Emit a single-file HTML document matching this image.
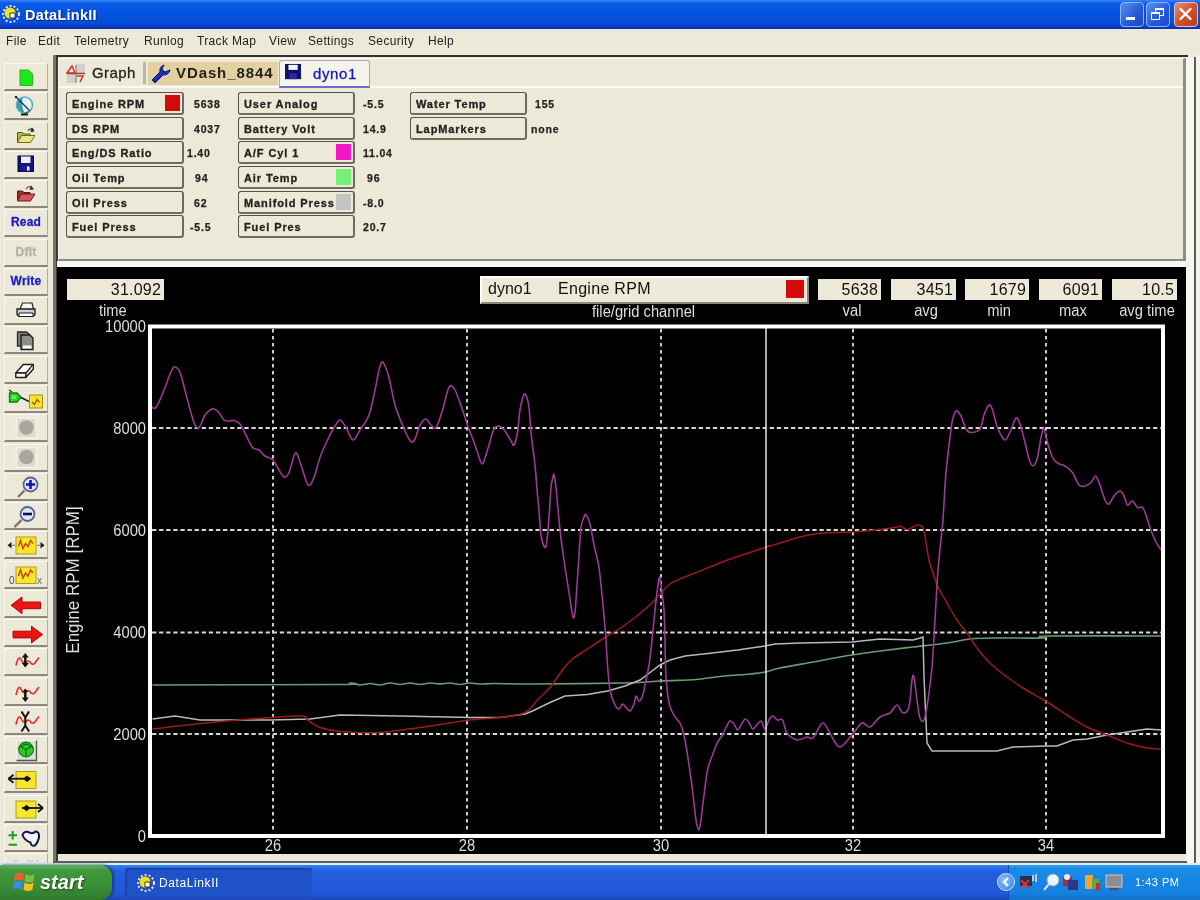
<!DOCTYPE html><html><head><meta charset="utf-8"><title>DataLinkII</title><style>
*{box-sizing:border-box;margin:0;padding:0}
html,body{width:1200px;height:900px;overflow:hidden;background:#ece9d8;font-family:"Liberation Sans",sans-serif;}
#root{position:relative;width:1200px;height:900px;overflow:hidden;background:#ece9d8;filter:blur(.75px)}
.abs{position:absolute}
#title{position:absolute;left:0;top:0;width:1200px;height:29px;background:linear-gradient(#3a86f4 0,#0c5eea 10%,#0453e0 40%,#0450da 78%,#0a3cc4 92%,#0a2eb0 100%);}
#title .t{position:absolute;left:25px;top:7px;color:#fff;font-weight:bold;font-size:14.500px;letter-spacing:.25px;text-shadow:1px 1px 1px #0a2a80}
.wb{position:absolute;top:2px;width:24px;height:25px;border:1.500px solid #8db6ff;border-radius:4px;background:linear-gradient(135deg,#5b8ff0,#2458d8 60%,#1c48c0)}
#menu{position:absolute;left:0;top:29px;width:1200px;height:26px;background:#ece9d8}
#menu span{position:absolute;top:5px;font-size:12px;color:#222;letter-spacing:.35px}
.tb{position:absolute;left:4px;width:44px;height:28px;background:#ece9d8;border-bottom:2px solid #8a887c;border-right:1px solid #b0ad9e;border-top:1px solid #f8f7f0;border-left:1px solid #f8f7f0}
.tb svg{position:absolute;left:-1px;top:-1px}
.tbt{font-weight:bold;font-size:12px;text-align:center;line-height:25px;color:#1a1ac8;letter-spacing:.2px;-webkit-text-stroke:.3px currentColor}
.cb{position:absolute;height:23px;letter-spacing:.9px;-webkit-text-stroke:.3px #222;border:1px solid #55534a;border-bottom:2px solid #6e6c62;border-right:2px solid #6e6c62;border-radius:3px;background:#ece9d8;font-weight:bold;font-size:11px;color:#222;line-height:22px;padding-left:5px;white-space:nowrap;overflow:hidden}
.cb i{position:absolute;right:2px;top:2px;width:15px;height:16px;display:block}
.cv{position:absolute;font-weight:bold;font-size:10.500px;color:#222;white-space:nowrap;letter-spacing:.8px;-webkit-text-stroke:.25px #222}
.vb{position:absolute;top:279px;height:21px;background:#ece9d8;color:#111;font-size:16px;text-align:right;line-height:21px;padding-right:3px}
.vl{position:absolute;top:302px;color:#dedede;font-size:16px;transform:scaleX(.92);text-align:center;width:90px}
.al{position:absolute;color:#dedede;font-size:16px;transform:scaleX(.92);white-space:nowrap}
</style></head><body><div id="root">
<div id="title"><svg class="abs" style="left:1px;top:4px" width="20" height="20" viewBox="0 0 20 20"><g stroke="#e8e8e8" stroke-width="2" stroke-dasharray="2 2"><circle cx="10" cy="10" r="8" fill="none"/></g><circle cx="9" cy="9" r="5.5" fill="#f2e21a"/><path d="M9 14 L9 9 L14 9 L14 14Z" fill="#fff" stroke="#333" stroke-width="1"/></svg><div class="t">DataLinkII</div>
<div class="wb" style="left:1119.500px"><div class="abs" style="left:5px;top:14px;width:9px;height:3px;background:#fff"></div></div>
<div class="wb" style="left:1146px"><div class="abs" style="left:8px;top:5px;width:9px;height:8px;border:1px solid #fff;border-top:2px solid #fff"></div><div class="abs" style="left:4px;top:9px;width:9px;height:8px;border:1px solid #fff;border-top:2px solid #fff;background:#2c5fd8"></div></div>
<div class="wb" style="left:1173.500px;border-color:#e8c0c8;background:linear-gradient(135deg,#e8907a,#d2502c 50%,#b83a1c)"><svg width="21" height="22" viewBox="0 0 21 22"><path d="M5.5 6 L15.5 16 M15.5 6 L5.5 16" stroke="#fff" stroke-width="2.4" stroke-linecap="round"/></svg></div>
</div>
<div id="menu">
<span style="left:6px">File</span>
<span style="left:38px">Edit</span>
<span style="left:74px">Telemetry</span>
<span style="left:144px">Runlog</span>
<span style="left:197px">Track Map</span>
<span style="left:269px">View</span>
<span style="left:308px">Settings</span>
<span style="left:368px">Security</span>
<span style="left:428px">Help</span>
</div>
<div class="tb" style="top:63px"><svg width="44" height="28" viewBox="0 0 44 28"><path d="M16 7 h8.500 l4 4 v11.500 h-12.500z" fill="#1de61d" stroke="#22b822" stroke-width="1"/></svg></div>
<div class="tb" style="top:92px"><svg width="44" height="28" viewBox="0 0 44 28"><circle cx="20.500" cy="13" r="8" fill="#e2f4f4" stroke="#5fb0b4" stroke-width="1.6"/><path d="M12.800 13 q1 -6 6 -7.500 q-2 7 1.500 15 q-7 -1 -7.500 -7.500z" fill="#3f9ca8"/><path d="M19 21 q5 -1 8 -4 q-1 4 -5 5z" fill="#2a7a88"/><path d="M12 5 L25 18" stroke="#1c2c66" stroke-width="1.300"/><circle cx="12" cy="5" r="1.3" fill="#1c2c66"/><path d="M17 22.500 h7" stroke="#1a1a1a" stroke-width="2"/></svg></div>
<div class="tb" style="top:122px"><svg width="44" height="28" viewBox="0 0 44 28"><path d="M13.500 20.500 v-10 h5 l1.500 1.500 h6 v2" fill="#b8b048" stroke="#5e5e1c" stroke-width="1"/><path d="M13.500 20.500 l4 -7 h13.500 l-4.500 7z" fill="#ece488" stroke="#6a6a20" stroke-width="1"/><path d="M24 8.500 q3 -3 5.500 -0.500" fill="none" stroke="#333" stroke-width="1.2"/><path d="M28 5.500 l2.500 4 l-4 0.500z" fill="#222"/></svg></div>
<div class="tb" style="top:151px"><svg width="44" height="28" viewBox="0 0 44 28"><rect x="14" y="5" width="15.500" height="15.500" fill="#12127e" stroke="#080840" stroke-width="1"/><rect x="17" y="5.500" width="9.500" height="6.500" fill="#eeeefc"/><rect x="17.500" y="14.500" width="8.500" height="6" fill="#1a1a8a"/><rect x="23" y="15.500" width="2.500" height="4" fill="#eeeefc"/></svg></div>
<div class="tb" style="top:180px"><svg width="44" height="28" viewBox="0 0 44 28"><path d="M13.500 21 v-10 h5 l1.500 1.500 h6 v2" fill="#a02c2c" stroke="#5e1414" stroke-width="1"/><path d="M13.500 21 l4 -7 h13.500 l-4.500 7z" fill="#d45858" stroke="#6a1a1a" stroke-width="1"/><path d="M22 9 q3 -4 6.500 -1" fill="none" stroke="#444" stroke-width="1.2"/><path d="M27 5.500 l3 4 l-4.500 .5z" fill="#333"/></svg></div>
<div class="tb tbt" style="top:209px;color:#1a1ac8">Read</div>
<div class="tb tbt" style="top:239px;color:#b4b1a4">Dflt</div>
<div class="tb tbt" style="top:268px;color:#1a1ac8">Write</div>
<div class="tb" style="top:297px"><svg width="44" height="28" viewBox="0 0 44 28"><path d="M16 12 l2.500 -6 h9.500 l1.500 6" fill="#f6f6f6" stroke="#222" stroke-width="1.2"/><path d="M13 12 h18 v5.500 l-1.500 1.500 h-15 l-1.500 -1.500z" fill="#cfcfcf" stroke="#1c1c1c" stroke-width="1.3"/><path d="M15 16 h14 v3.500 h-14z" fill="#fff" stroke="#1c1c1c" stroke-width="1"/></svg></div>
<div class="tb" style="top:326px"><svg width="44" height="28" viewBox="0 0 44 28"><path d="M13.500 6 h9 l3 2.500 v11.500 h-12z" fill="#7e7e7e" stroke="#2a2a2a" stroke-width="1.3"/><path d="M17 9 h9 l3 3 v11.500 h-12z" fill="#8c8c8c" stroke="#1c1c1c" stroke-width="1.3"/><rect x="19" y="19.500" width="8.500" height="3" fill="#fff"/></svg></div>
<div class="tb" style="top:356px"><svg width="44" height="28" viewBox="0 0 44 28"><path d="M11.800 17 l7.500 -8.500 h10 l-7.500 8.500z" fill="#fff" stroke="#1c1c1c" stroke-width="1.4" stroke-linejoin="round"/><path d="M11.800 17 v4.500 h10 v-4.500z M21.800 21.500 l7.500 -8.500 v-4.500" fill="#fff" stroke="#1c1c1c" stroke-width="1.4" stroke-linejoin="round"/></svg></div>
<div class="tb" style="top:385px"><svg width="44" height="28" viewBox="0 0 44 28"><path d="M5 5 l3 2" stroke="#222" stroke-width="1.2"/><path d="M5.500 8 h7.500 l4 4 -4 5 h-7.500z" fill="#24d824" stroke="#0c7a0c" stroke-width="1.3"/><rect x="7.500" y="10.500" width="4.500" height="3.500" fill="#5aea5a"/><path d="M17 12.500 l8 4" stroke="#222" stroke-width="1.8"/><rect x="25.500" y="10" width="13" height="13" fill="#f6e432" stroke="#a89414" stroke-width="1"/><path d="M28 17 l2.500 2.500 2.500 -5 2.500 3" stroke="#b05000" stroke-width="1.300" fill="none"/></svg></div>
<div class="tb" style="top:414px"><svg width="44" height="28" viewBox="0 0 44 28"><rect x="12.500" y="4" width="20" height="20" fill="#dddbd0" stroke="#f4f3ea" stroke-width="1.5"/><circle cx="22.500" cy="13.500" r="7.300" fill="#a9a79c"/></svg></div>
<div class="tb" style="top:444px"><svg width="44" height="28" viewBox="0 0 44 28"><rect x="12.500" y="3.500" width="20" height="20" fill="#dddbd0" stroke="#f4f3ea" stroke-width="1.5"/><circle cx="22.500" cy="13" r="7.300" fill="#a9a79c"/></svg></div>
<div class="tb" style="top:473px"><svg width="44" height="28" viewBox="0 0 44 28"><path d="M14 24 l6.500 -6.500" stroke="#77766c" stroke-width="2.4"/><circle cx="26.500" cy="11.500" r="7" fill="#dfe6ff" stroke="#5a6290" stroke-width="1.8"/><path d="M22 11.500 h9 M26.500 7 v9" stroke="#1212b4" stroke-width="2.6"/></svg></div>
<div class="tb" style="top:502px"><svg width="44" height="28" viewBox="0 0 44 28"><path d="M10.500 25 l7 -7" stroke="#77766c" stroke-width="2.4"/><circle cx="23.500" cy="12" r="7" fill="#dfe6ff" stroke="#5a6290" stroke-width="1.8"/><path d="M19 12 h9" stroke="#12124a" stroke-width="2.6"/></svg></div>
<div class="tb" style="top:531px"><svg width="44" height="28" viewBox="0 0 44 28"><rect x="12" y="6" width="20" height="17" fill="#f8e62e" stroke="#b39c14" stroke-width="1"/><path d="M14.5 15.5 l2 -6 2.500 8 2.500 -5 2.500 3 2.500 -6 2.500 3" stroke="#c44a00" fill="none" stroke-width="1.500"/><path d="M3.500 14.300 l4 -3.200 v6.400z M40.500 14.300 l-4 -3.200 v6.400z" fill="#1a1a1a"/><path d="M7 14.300 h4 M33 14.300 h4" stroke="#777" stroke-width="1"/></svg></div>
<div class="tb" style="top:561px"><svg width="44" height="28" viewBox="0 0 44 28"><rect x="12" y="6" width="20" height="16.500" fill="#f8e62e" stroke="#b39c14" stroke-width="1"/><path d="M14.5 15.0 l2 -6 2.500 8 2.500 -5 2.500 3 2.500 -6 2.500 3" stroke="#c44a00" fill="none" stroke-width="1.500"/><text x="5" y="23" font-size="10" font-family="Liberation Sans" fill="#444">0</text><text x="33" y="23" font-size="10" font-family="Liberation Sans" fill="#666">x</text></svg></div>
<div class="tb" style="top:590px"><svg width="44" height="28" viewBox="0 0 44 28"><path d="M7 15.300 l11 -8.300 v5 h18.500 v6.700 h-18.500 v5z" fill="#ec1414" stroke="#a80c0c" stroke-width="1"/></svg></div>
<div class="tb" style="top:619px"><svg width="44" height="28" viewBox="0 0 44 28"><path d="M38.500 15.500 l-11 -8.300 v5 h-18.500 v6.700 h18.500 v5z" fill="#ec1414" stroke="#a80c0c" stroke-width="1"/></svg></div>
<div class="tb" style="top:648px"><svg width="44" height="28" viewBox="0 0 44 28"><path d="M12 17.5 q2.500 -11 5 -6 q2 5 5 3 q3 -3 5 1 q3 2 5 -2 l3 -4" stroke="#e83030" fill="none" stroke-width="1.700"/><path d="M21.300 5 l-3.500 4.500 h2.300 v5.500 h-2.300 l3.500 4.500 3.500 -4.500 h-2.300 v-5.500 h2.300z" fill="#111"/></svg></div>
<div class="tb" style="top:678px"><svg width="44" height="28" viewBox="0 0 44 28"><path d="M12 17.0 q2.500 -11 5 -6 q2 5 5 3 q3 -3 5 1 q3 2 5 -2 l3 -4" stroke="#e83030" fill="none" stroke-width="1.700"/><path d="M21.300 10.500 l-3 3.500 h1.800 v5.500 h-2.300 l3.500 4.500 3.500 -4.500 h-2.300 v-5.500 h1.800z" fill="#111"/></svg></div>
<div class="tb" style="top:707px"><svg width="44" height="28" viewBox="0 0 44 28"><path d="M12 17.5 q2.500 -11 5 -6 q2 5 5 3 q3 -3 5 1 q3 2 5 -2 l3 -4" stroke="#e83030" fill="none" stroke-width="1.700"/><path d="M17.500 4.500 l3.800 6 3.800 -6 M21.300 9 v11 M17.500 24.500 l3.800 -6 3.800 6" stroke="#111" stroke-width="2" fill="none"/></svg></div>
<div class="tb" style="top:736px"><svg width="44" height="28" viewBox="0 0 44 28"><rect x="12.500" y="4.500" width="20" height="20" fill="#deddd2" stroke="#f4f3ea" stroke-width="1"/><path d="M12.500 24.500 h20 v-20" fill="none" stroke="#55534a" stroke-width="1.3"/><circle cx="22" cy="13.500" r="7.300" fill="#2ccc2c" stroke="#0e7a0e" stroke-width="1.2"/><path d="M16.500 10.500 l5.500 -2.500 5.500 2.500 -5.500 3z M22 13.500 v6.500" stroke="#0a660a" fill="none" stroke-width="1.2"/></svg></div>
<div class="tb" style="top:765px"><svg width="44" height="28" viewBox="0 0 44 28"><rect x="12" y="6.500" width="20" height="17" fill="#f8e62e" stroke="#b39c14"/><path d="M4.500 13.700 h22" stroke="#111" stroke-width="1.800"/><path d="M4.500 13.700 l5 -4 M4.500 13.700 l5 4" stroke="#111" stroke-width="1.800" fill="none"/><path d="M19 13.700 l4 -3.200 4 3.200 -4 3.200z" fill="#111"/></svg></div>
<div class="tb" style="top:795px"><svg width="44" height="28" viewBox="0 0 44 28"><rect x="12" y="6" width="20" height="17" fill="#f8e62e" stroke="#b39c14"/><path d="M18 13 h21" stroke="#111" stroke-width="1.800"/><path d="M39 13 l-5 -4 M39 13 l-5 4" stroke="#111" stroke-width="1.800" fill="none"/><path d="M18.500 13 l4 -3.200 4 3.200 -4 3.200z" fill="#111"/></svg></div>
<div class="tb" style="top:824px"><svg width="44" height="28" viewBox="0 0 44 28"><path d="M4.500 11.300 h8.500 M8.700 7 v8.500 M4.500 20.700 h8.500" stroke="#1c9c1c" stroke-width="2"/><path d="M18.500 11 q2 -5 7 -2.500 q3 2 6 -1 q4 0 3.500 6 q-1 5 -4 8 q-4 1 -4.500 -3 q-6 -2 -8 -7.500z" fill="#f4f4ff" stroke="#15154a" stroke-width="2"/></svg></div>
<div class="tb" style="top:853px"><svg width="44" height="28" viewBox="0 0 44 28"><path d="M9 8 h5 M23 8 h6 M32 8 h3" stroke="#d0cec2" stroke-width="1.500"/></svg></div>
<div class="abs" style="left:53px;top:55px;width:1135px;height:2px;background:#33322d"></div>
<div class="abs" style="left:53px;top:55px;width:3px;height:807px;background:#77756b"></div>
<div class="abs" style="left:56px;top:57px;width:1.500px;height:805px;background:#3c3b36"></div>
<div class="abs" style="left:1186px;top:57px;width:8px;height:806px;background:#f6f5ee"></div>
<div class="abs" style="left:1194px;top:57px;width:2px;height:806px;background:#5e5d55"></div>
<div class="abs" style="left:1196px;top:55px;width:4px;height:809px;background:#f4f3ee"></div>
<div class="abs" style="left:58px;top:58px;width:1128px;height:203px;border:1px solid #fbfaf6;border-right:3px solid #8f8d81;border-bottom:2px solid #8d8b7f"></div>
<div class="abs" style="left:57px;top:261px;width:1129px;height:6px;background:#f8f7f1"></div>
<div class="abs" style="left:59px;top:86px;width:1124px;height:1.500px;background:#fbfaf6"></div>
<svg class="abs" style="left:66px;top:64px" width="20" height="20" viewBox="0 0 20 20"><rect x="10" y="0" width="9" height="9" fill="#d2d0c8"/><rect x="1" y="10" width="9" height="9" fill="#d2d0c8"/><path d="M10 1 v18" stroke="#9a988e" stroke-width="1.500"/><path d="M1 9.500 h18" stroke="#b03838" stroke-width="1.500"/><path d="M1 9 L6 2 L9 9 Z" fill="none" stroke="#d03030" stroke-width="1.5"/><path d="M11 12 h6 l-3 6" fill="none" stroke="#d03030" stroke-width="1.5"/></svg>
<div class="abs" style="left:92px;top:64px;font-size:15px;color:#222;letter-spacing:.4px;-webkit-text-stroke:.3px #222">Graph</div>
<div class="abs" style="left:143px;top:62px;width:3px;height:22px;background:#b9b7aa"></div>
<div class="abs" style="left:148px;top:62px;width:130px;height:23px;background:#e2d0a0"></div>
<svg class="abs" style="left:150px;top:63px" width="22" height="20" viewBox="0 0 22 20"><path d="M2 17 L10 9 Q9 4 14 2 L12 6 L15 9 L20 7 Q19 12 13 12 L5 20 Z" fill="#1a2fb8" stroke="#0c1870" stroke-width="1"/></svg>
<div class="abs" style="left:176px;top:64px;font-size:15px;font-weight:bold;color:#222;letter-spacing:.9px">VDash_8844</div>
<div class="abs" style="left:279px;top:60px;width:91px;height:28px;background:#f4f3ec;border:1px solid #a9a8c8;border-bottom:2px solid #6a6ad0;border-radius:3px 3px 0 0"></div>
<svg class="abs" style="left:285px;top:63.500px" width="17" height="16" viewBox="0 0 20 19"><rect x="0.500" y="0.500" width="18" height="17" fill="#10106a" stroke="#05053a"/><rect x="4" y="1" width="11" height="6" fill="#f4f4ff"/><rect x="5" y="11" width="9" height="7" fill="#2a2a9a"/></svg>
<div class="abs" style="left:313px;top:65px;font-size:15px;color:#1a1ab8;letter-spacing:.6px;-webkit-text-stroke:.3px #1a1ab8">dyno1</div>
<div class="cb" style="left:66px;top:92px;width:118px">Engine RPM<i style="background:#d40a0a"></i></div>
<div class="cv" style="left:194px;top:97.5px">5638</div>
<div class="cb" style="left:66px;top:117px;width:118px">DS RPM</div>
<div class="cv" style="left:194px;top:122.5px">4037</div>
<div class="cb" style="left:66px;top:141px;width:118px">Eng/DS Ratio</div>
<div class="cv" style="left:187px;top:146.5px">1.40</div>
<div class="cb" style="left:66px;top:166px;width:118px">Oil Temp</div>
<div class="cv" style="left:195px;top:171.5px">94</div>
<div class="cb" style="left:66px;top:191px;width:118px">Oil Press</div>
<div class="cv" style="left:194px;top:196.5px">62</div>
<div class="cb" style="left:66px;top:215px;width:118px">Fuel Press</div>
<div class="cv" style="left:190px;top:220.5px">-5.5</div>
<div class="cb" style="left:238px;top:92px;width:117px">User Analog</div>
<div class="cv" style="left:363px;top:97.5px">-5.5</div>
<div class="cb" style="left:238px;top:117px;width:117px">Battery Volt</div>
<div class="cv" style="left:363px;top:122.5px">14.9</div>
<div class="cb" style="left:238px;top:141px;width:117px">A/F Cyl 1<i style="background:#f516c8"></i></div>
<div class="cv" style="left:363px;top:146.5px">11.04</div>
<div class="cb" style="left:238px;top:166px;width:117px">Air Temp<i style="background:#78f078"></i></div>
<div class="cv" style="left:367px;top:171.5px">96</div>
<div class="cb" style="left:238px;top:191px;width:117px">Manifold Press<i style="background:#c4c4c4"></i></div>
<div class="cv" style="left:363px;top:196.5px">-8.0</div>
<div class="cb" style="left:238px;top:215px;width:117px">Fuel Pres</div>
<div class="cv" style="left:363px;top:220.5px">20.7</div>
<div class="cb" style="left:410px;top:92px;width:117px">Water Temp</div>
<div class="cv" style="left:535px;top:97.5px">155</div>
<div class="cb" style="left:410px;top:117px;width:117px">LapMarkers</div>
<div class="cv" style="left:531px;top:122.5px">none</div>
<div class="abs" style="left:57px;top:267px;width:1129px;height:587px;background:#000"></div>
<div class="abs" style="left:53px;top:861px;width:1134px;height:1.500px;background:#5e5d55"></div>
<div class="vb" style="left:67px;width:97px;letter-spacing:.2px">31.092</div>
<div class="al" style="left:99px;top:302px;transform-origin:0 50%">time</div>
<div class="abs" style="left:480px;top:276px;width:329px;height:28px;background:#ece9d8;border:2px solid #8a887c;border-top-color:#fff;border-left-color:#fff"></div>
<div class="abs" style="left:488px;top:280px;font-size:16px;color:#111;letter-spacing:0">dyno1</div>
<div class="abs" style="left:558px;top:280px;font-size:16px;color:#111;letter-spacing:.3px">Engine RPM</div>
<div class="abs" style="left:786px;top:280px;width:18px;height:18px;background:#d40a0a"></div>
<div class="al" style="left:592px;top:303px;transform-origin:0 50%">file/grid channel</div>
<div class="vb" style="left:818px;width:63px;letter-spacing:.2px">5638</div>
<div class="vl" style="left:806.5px">val</div>
<div class="vb" style="left:891px;width:65px;letter-spacing:.2px">3451</div>
<div class="vl" style="left:880.5px">avg</div>
<div class="vb" style="left:965px;width:64px;letter-spacing:.2px">1679</div>
<div class="vl" style="left:954.0px">min</div>
<div class="vb" style="left:1039px;width:63px;letter-spacing:.2px">6091</div>
<div class="vl" style="left:1027.5px">max</div>
<div class="vb" style="left:1112px;width:65px;letter-spacing:.2px">10.5</div>
<div class="vl" style="left:1101.5px">avg time</div>
<div class="al" style="left:66px;width:80px;text-align:right;transform-origin:100% 50%;top:318px">10000</div>
<div class="al" style="left:66px;width:80px;text-align:right;transform-origin:100% 50%;top:420px">8000</div>
<div class="al" style="left:66px;width:80px;text-align:right;transform-origin:100% 50%;top:522px">6000</div>
<div class="al" style="left:66px;width:80px;text-align:right;transform-origin:100% 50%;top:624px">4000</div>
<div class="al" style="left:66px;width:80px;text-align:right;transform-origin:100% 50%;top:726px">2000</div>
<div class="al" style="left:66px;width:80px;text-align:right;transform-origin:100% 50%;top:828px">0</div>
<div class="al" style="left:253px;width:40px;text-align:center;top:837px">26</div>
<div class="al" style="left:447px;width:40px;text-align:center;top:837px">28</div>
<div class="al" style="left:641px;width:40px;text-align:center;top:837px">30</div>
<div class="al" style="left:833px;width:40px;text-align:center;top:837px">32</div>
<div class="al" style="left:1026px;width:40px;text-align:center;top:837px">34</div>
<div class="abs" style="left:0;top:0;width:0;height:0"><div style="position:absolute;left:73.500px;top:580px;width:0;height:0"><div style="position:absolute;left:-100px;top:-12px;width:200px;height:24px;line-height:24px;text-align:center;color:#dedede;font-size:17px;white-space:nowrap;transform:rotate(-90deg) scaleY(1.08)">Engine RPM [RPM]</div></div></div>
<svg class="abs" style="left:0;top:0" width="1200" height="900" viewBox="0 0 1200 900"><path d="M152 428 H1161" stroke="#d6d6d6" stroke-width="1.9" stroke-dasharray="4.300 2.800"/><path d="M152 530 H1161" stroke="#d6d6d6" stroke-width="1.9" stroke-dasharray="4.300 2.800"/><path d="M152 632.5 H1161" stroke="#d6d6d6" stroke-width="1.9" stroke-dasharray="4.300 2.800"/><path d="M152 734 H1161" stroke="#d6d6d6" stroke-width="1.9" stroke-dasharray="4.300 2.800"/><path d="M273 329 V833" stroke="#d6d6d6" stroke-width="1.9" stroke-dasharray="3.500 3.500"/><path d="M467 329 V833" stroke="#d6d6d6" stroke-width="1.9" stroke-dasharray="3.500 3.500"/><path d="M661 329 V833" stroke="#d6d6d6" stroke-width="1.9" stroke-dasharray="3.500 3.500"/><path d="M853 329 V833" stroke="#d6d6d6" stroke-width="1.9" stroke-dasharray="3.500 3.500"/><path d="M1046 329 V833" stroke="#d6d6d6" stroke-width="1.9" stroke-dasharray="3.500 3.500"/><path d="M152.5 685.0 C183.8 684.9 307.1 684.8 340.0 684.5 C372.9 684.2 346.7 682.9 350.0 683.0 C353.3 683.1 356.7 684.9 360.0 685.0 C363.3 685.1 366.7 683.5 370.0 683.5 C373.3 683.5 376.7 685.1 380.0 685.0 C383.3 684.9 386.7 683.1 390.0 683.0 C393.3 682.9 396.7 684.5 400.0 684.5 C403.3 684.5 406.7 683.0 410.0 683.0 C413.3 683.0 416.7 684.5 420.0 684.5 C423.3 684.5 426.7 683.1 430.0 683.0 C433.3 682.9 436.7 684.0 440.0 684.0 C443.3 684.0 446.7 682.9 450.0 683.0 C453.3 683.1 456.7 684.5 460.0 684.5 C463.3 684.5 466.7 683.1 470.0 683.0 C473.3 682.9 475.8 683.9 480.0 684.0 C484.2 684.1 485.8 683.5 495.0 683.5 C504.2 683.5 513.3 684.1 535.0 684.0 C556.7 683.9 604.2 683.5 625.0 683.0 C645.8 682.5 649.6 681.5 660.0 681.0 C670.4 680.5 680.8 680.3 687.5 680.0 C694.2 679.7 693.8 679.7 700.0 679.0 C706.2 678.3 716.7 676.8 725.0 676.0 C733.3 675.2 743.3 674.7 750.0 674.0 C756.7 673.3 760.0 673.0 765.0 672.0 C770.0 671.0 772.0 669.7 780.0 668.0 C788.0 666.3 801.0 664.2 813.0 662.0 C825.0 659.8 840.8 656.8 852.0 655.0 C863.2 653.2 869.8 652.3 880.0 651.0 C890.2 649.7 901.8 648.3 913.0 647.0 C924.2 645.7 937.5 644.3 947.0 643.0 C956.5 641.7 961.7 639.8 970.0 639.0 C978.3 638.2 984.8 638.2 997.0 638.0 C1009.2 637.8 1034.7 638.3 1043.0 638.0 C1051.3 637.7 1027.3 636.3 1047.0 636.0 C1066.7 635.7 1142.0 636.0 1161.0 636.0" fill="none" stroke="#6e9a72" stroke-width="1.6"/><path d="M152.5 719.0 L175.0 716.0 L200.0 720.0 L270.0 720.0 L310.0 719.0 L340.0 715.0 L400.0 716.0 L470.0 717.5 L500.0 717.5 L525.0 714.0 L532.5 711.0 L550.0 702.5 L565.0 696.0 L587.5 694.5 L607.5 691.0 L625.0 686.0 L640.0 680.0 L650.0 672.5 L660.0 665.0 L670.0 660.0 L685.0 656.0 L712.5 653.0 L737.5 650.0 L765.0 646.0 L775.0 644.0 L800.0 643.0 L852.0 642.0 L880.0 639.0 L913.0 640.0 L920.0 638.0 L923.0 637.0 L924.0 677.0 L927.0 743.0 L932.0 751.0 L997.0 751.0 L1013.0 747.0 L1047.0 746.0 L1057.0 746.0 L1073.0 740.0 L1087.0 739.0 L1107.0 735.0 L1127.0 732.0 L1147.0 729.0 L1161.0 730.0" fill="none" stroke="#b9b9b9" stroke-width="1.5"/><path d="M152.5 729.0 C160.4 728.1 183.8 725.2 200.0 723.5 C216.2 721.8 233.3 720.2 250.0 719.0 C266.7 717.8 290.4 715.8 300.0 716.0 C309.6 716.2 304.2 718.1 307.5 720.0 C310.8 721.9 314.6 725.6 320.0 727.5 C325.4 729.4 330.0 730.7 340.0 731.5 C350.0 732.3 366.7 733.2 380.0 732.5 C393.3 731.8 405.0 729.6 420.0 727.5 C435.0 725.4 456.7 721.7 470.0 720.0 C483.3 718.3 490.8 718.8 500.0 717.5 C509.2 716.2 518.8 715.4 525.0 712.5 C531.2 709.6 533.3 704.2 537.5 700.0 C541.7 695.8 545.8 692.5 550.0 687.5 C554.2 682.5 558.8 674.8 562.5 670.0 C566.2 665.2 568.3 662.5 572.5 659.0 C576.7 655.5 582.1 652.6 587.5 649.0 C592.9 645.4 598.8 641.5 605.0 637.5 C611.2 633.5 617.5 630.4 625.0 625.0 C632.5 619.6 644.2 610.2 650.0 605.0 C655.8 599.8 656.7 597.5 660.0 594.0 C663.3 590.5 666.7 586.5 670.0 584.0 C673.3 581.5 675.0 581.2 680.0 579.0 C685.0 576.8 692.5 574.0 700.0 571.0 C707.5 568.0 716.7 564.1 725.0 561.0 C733.3 557.9 743.3 554.8 750.0 552.5 C756.7 550.2 760.0 549.1 765.0 547.5 C770.0 545.9 774.2 544.8 780.0 543.0 C785.8 541.2 792.8 538.7 800.0 537.0 C807.2 535.3 814.3 533.8 823.0 533.0 C831.7 532.2 842.5 532.6 852.0 532.0 C861.5 531.4 872.5 530.3 880.0 529.5 C887.5 528.7 893.7 527.6 897.0 527.0 C900.3 526.4 898.2 525.6 900.0 526.0 C901.8 526.4 904.6 529.7 907.5 529.5 C910.4 529.3 914.9 525.2 917.5 525.0 C920.1 524.8 921.6 525.1 923.0 528.0 C924.4 530.9 925.0 537.2 926.0 542.5 C927.0 547.8 928.0 555.4 929.0 560.0 C930.0 564.6 930.5 565.5 932.0 570.0 C933.5 574.5 935.5 581.5 938.0 587.0 C940.5 592.5 943.8 597.5 947.0 603.0 C950.2 608.5 953.7 615.0 957.0 620.0 C960.3 625.0 963.7 628.3 967.0 633.0 C970.3 637.7 973.2 643.0 977.0 648.0 C980.8 653.0 985.0 658.2 990.0 663.0 C995.0 667.8 1001.5 672.8 1007.0 677.0 C1012.5 681.2 1016.3 683.8 1023.0 688.0 C1029.7 692.2 1039.7 697.5 1047.0 702.0 C1054.3 706.5 1060.3 710.8 1067.0 715.0 C1073.7 719.2 1080.3 723.7 1087.0 727.0 C1093.7 730.3 1100.3 732.3 1107.0 735.0 C1113.7 737.7 1120.3 740.8 1127.0 743.0 C1133.7 745.2 1141.3 747.0 1147.0 748.0 C1152.7 749.0 1158.7 748.8 1161.0 749.0" fill="none" stroke="#9c1c1c" stroke-width="1.5"/><path d="M150.0 405.0 C151.0 405.4 153.5 410.4 156.0 407.5 C158.5 404.6 162.7 393.1 165.0 387.5 C167.3 381.9 168.5 377.4 170.0 374.0 C171.5 370.6 172.7 367.8 174.0 367.0 C175.3 366.2 176.8 367.7 178.0 369.0 C179.2 370.3 179.4 369.8 181.0 375.0 C182.6 380.2 185.3 392.1 187.5 400.0 C189.7 407.9 192.1 417.9 194.0 422.5 C195.9 427.1 197.2 428.8 199.0 427.5 C200.8 426.2 203.2 417.9 205.0 415.0 C206.8 412.1 208.5 411.0 210.0 410.0 C211.5 409.0 212.5 408.6 214.0 409.0 C215.5 409.4 217.3 410.7 219.0 412.5 C220.7 414.3 222.3 418.6 224.0 420.0 C225.7 421.4 227.3 420.9 229.0 421.0 C230.7 421.1 232.2 420.0 234.0 420.5 C235.8 421.0 238.0 421.6 240.0 424.0 C242.0 426.4 243.9 431.1 246.0 435.0 C248.1 438.9 250.3 445.0 252.5 447.5 C254.7 450.0 256.9 448.6 259.0 450.0 C261.1 451.4 262.8 454.4 265.0 456.0 C267.2 457.6 270.4 457.6 272.5 459.5 C274.6 461.4 275.6 464.6 277.5 467.5 C279.4 470.4 282.1 476.2 284.0 477.0 C285.9 477.8 287.1 476.5 289.0 472.5 C290.9 468.5 293.5 454.2 295.5 453.0 C297.5 451.8 298.9 459.7 301.0 465.0 C303.1 470.3 305.8 482.9 308.0 485.0 C310.2 487.1 312.0 482.1 314.0 477.5 C316.0 472.9 317.8 463.8 320.0 457.5 C322.2 451.2 325.0 445.2 327.5 440.0 C330.0 434.8 332.9 429.3 335.0 426.0 C337.1 422.7 338.2 419.8 340.0 420.0 C341.8 420.2 343.8 424.2 346.0 427.5 C348.2 430.8 350.7 439.6 353.0 440.0 C355.3 440.4 357.3 434.2 360.0 430.0 C362.7 425.8 366.5 421.7 369.0 415.0 C371.5 408.3 373.3 397.5 375.0 390.0 C376.7 382.5 377.8 374.7 379.0 370.0 C380.2 365.3 381.0 362.7 382.0 362.0 C383.0 361.3 383.8 363.4 385.0 366.0 C386.2 368.6 387.3 371.0 389.0 377.5 C390.7 384.0 392.8 397.1 395.0 405.0 C397.2 412.9 400.2 419.3 402.5 425.0 C404.8 430.7 407.1 436.3 409.0 439.0 C410.9 441.7 412.2 443.3 414.0 441.0 C415.8 438.7 418.0 428.7 420.0 425.0 C422.0 421.3 424.3 419.2 426.0 419.0 C427.7 418.8 428.3 422.6 430.0 424.0 C431.7 425.4 433.9 429.8 436.0 427.5 C438.1 425.2 440.7 415.8 442.5 410.0 C444.3 404.2 445.8 397.0 447.0 393.0 C448.2 389.0 448.7 386.5 450.0 386.0 C451.3 385.5 452.9 386.0 455.0 390.0 C457.1 394.0 460.4 404.2 462.5 410.0 C464.6 415.8 465.4 419.2 467.5 425.0 C469.6 430.8 472.9 439.2 475.0 445.0 C477.1 450.8 478.8 456.8 480.0 460.0 C481.2 463.2 481.7 464.3 482.5 464.0 C483.3 463.7 483.9 461.2 485.0 458.0 C486.1 454.8 487.5 449.8 489.0 445.0 C490.5 440.2 492.3 432.2 494.0 429.0 C495.7 425.8 497.2 425.7 499.0 426.0 C500.8 426.3 503.0 428.5 505.0 431.0 C507.0 433.5 509.5 438.7 511.0 441.0 C512.5 443.3 512.9 446.4 514.0 445.0 C515.1 443.6 516.5 438.3 517.5 432.5 C518.5 426.7 518.9 416.3 520.0 410.0 C521.1 403.7 522.8 396.5 524.0 394.5 C525.2 392.5 526.2 395.8 527.0 398.0 C527.8 400.2 528.3 401.8 529.0 407.5 C529.7 413.2 530.0 422.9 531.0 432.5 C532.0 442.1 533.9 454.6 535.0 465.0 C536.1 475.4 536.8 487.5 537.5 495.0 C538.2 502.5 538.4 503.3 539.0 510.0 C539.6 516.7 540.0 528.8 541.0 535.0 C542.0 541.2 544.0 546.7 545.0 547.5 C546.0 548.3 546.3 545.0 547.0 540.0 C547.7 535.0 548.3 526.2 549.0 517.5 C549.7 508.8 550.3 494.2 551.0 487.5 C551.7 480.8 552.5 479.1 553.0 477.0 C553.5 474.9 553.5 473.2 554.0 475.0 C554.5 476.8 555.0 478.3 556.0 487.5 C557.0 496.7 558.7 517.9 560.0 530.0 C561.3 542.1 562.5 549.6 564.0 560.0 C565.5 570.4 567.5 583.0 569.0 592.5 C570.5 602.0 572.0 613.8 573.0 617.0 C574.0 620.2 574.5 614.8 575.0 612.0 C575.5 609.2 575.3 609.5 576.0 600.0 C576.7 590.5 578.2 567.1 579.0 555.0 C579.8 542.9 580.2 533.8 581.0 527.5 C581.8 521.2 583.2 519.1 584.0 517.0 C584.8 514.9 585.0 513.8 586.0 515.0 C587.0 516.2 588.7 519.0 590.0 524.0 C591.3 529.0 592.5 537.8 594.0 545.0 C595.5 552.2 597.6 558.3 599.0 567.5 C600.4 576.7 601.5 590.0 602.5 600.0 C603.5 610.0 604.4 620.8 605.0 627.5 C605.6 634.2 605.6 633.8 606.0 640.0 C606.4 646.2 606.8 656.7 607.5 665.0 C608.2 673.3 608.8 683.3 610.0 690.0 C611.2 696.7 613.5 701.8 615.0 705.0 C616.5 708.2 617.8 709.2 619.0 709.0 C620.2 708.8 621.3 704.2 622.5 704.0 C623.7 703.8 624.8 706.3 626.0 707.5 C627.2 708.7 628.7 711.6 630.0 711.0 C631.3 710.4 633.0 706.5 634.0 704.0 C635.0 701.5 635.2 696.5 636.0 696.0 C636.8 695.5 637.9 701.0 639.0 701.0 C640.1 701.0 641.5 698.7 642.5 696.0 C643.5 693.3 643.9 690.2 645.0 685.0 C646.1 679.8 648.0 670.8 649.0 665.0 C650.0 659.2 650.0 659.2 651.0 650.0 C652.0 640.8 653.8 620.8 655.0 610.0 C656.2 599.2 657.2 590.5 658.0 585.0 C658.8 579.5 659.0 577.0 659.5 577.0 C660.0 577.0 660.2 579.5 661.0 585.0 C661.8 590.5 663.3 600.8 664.0 610.0 C664.7 619.2 664.7 628.8 665.0 640.0 C665.3 651.2 665.3 667.1 666.0 677.5 C666.7 687.9 667.9 696.7 669.0 702.5 C670.1 708.3 671.1 709.6 672.5 712.5 C673.9 715.4 676.1 717.9 677.5 720.0 C678.9 722.1 679.8 721.7 681.0 725.0 C682.2 728.3 683.7 733.3 685.0 740.0 C686.3 746.7 687.8 756.7 689.0 765.0 C690.2 773.3 691.3 780.8 692.5 790.0 C693.7 799.2 694.9 813.3 696.0 820.0 C697.1 826.7 698.2 830.0 699.0 830.0 C699.8 830.0 700.2 825.8 701.0 820.0 C701.8 814.2 702.9 803.3 704.0 795.0 C705.1 786.7 706.1 776.7 707.5 770.0 C708.9 763.3 710.8 759.6 712.5 755.0 C714.2 750.4 715.8 745.8 717.5 742.5 C719.2 739.2 721.1 737.5 722.5 735.0 C723.9 732.5 724.8 729.8 726.0 727.5 C727.2 725.2 728.7 721.6 730.0 721.0 C731.3 720.4 732.8 722.5 734.0 724.0 C735.2 725.5 736.3 729.8 737.5 730.0 C738.7 730.2 739.8 726.8 741.0 725.0 C742.2 723.2 743.7 719.4 745.0 719.0 C746.3 718.6 747.8 720.8 749.0 722.5 C750.2 724.2 751.3 728.4 752.5 729.0 C753.7 729.6 754.6 727.3 756.0 726.0 C757.4 724.7 759.5 720.5 761.0 721.0 C762.5 721.5 763.7 729.2 765.0 729.0 C766.3 728.8 767.8 722.2 769.0 720.0 C770.2 717.8 771.1 716.0 772.5 716.0 C773.9 716.0 775.8 719.3 777.5 720.0 C779.2 720.7 780.9 717.8 782.5 720.0 C784.1 722.2 784.6 729.7 787.0 733.0 C789.4 736.3 793.7 739.3 797.0 740.0 C800.3 740.7 804.3 737.3 807.0 737.0 C809.7 736.7 810.3 740.3 813.0 738.0 C815.7 735.7 819.8 723.2 823.0 723.0 C826.2 722.8 829.2 733.0 832.0 737.0 C834.8 741.0 836.7 747.3 840.0 747.0 C843.3 746.7 848.3 739.0 852.0 735.0 C855.7 731.0 859.0 724.3 862.0 723.0 C865.0 721.7 867.0 728.0 870.0 727.0 C873.0 726.0 876.7 719.3 880.0 717.0 C883.3 714.7 887.2 715.0 890.0 713.0 C892.8 711.0 894.8 705.0 897.0 705.0 C899.2 705.0 901.0 712.7 903.0 713.0 C905.0 713.3 907.5 712.5 909.0 707.0 C910.5 701.5 911.2 685.0 912.0 680.0 C912.8 675.0 913.2 673.7 914.0 677.0 C914.8 680.3 916.0 693.2 917.0 700.0 C918.0 706.8 918.8 714.7 920.0 718.0 C921.2 721.3 922.7 723.0 924.0 720.0 C925.3 717.0 926.7 708.8 928.0 700.0 C929.3 691.2 930.8 680.3 932.0 667.0 C933.2 653.7 934.0 636.2 935.0 620.0 C936.0 603.8 936.8 585.0 938.0 570.0 C939.2 555.0 941.2 538.3 942.0 530.0 C942.8 521.7 942.3 529.6 943.0 520.0 C943.7 510.4 944.8 486.2 946.0 472.5 C947.2 458.8 948.9 446.2 950.0 437.5 C951.1 428.8 951.5 424.4 952.5 420.0 C953.5 415.6 954.6 411.7 956.0 411.0 C957.4 410.3 959.3 413.0 961.0 416.0 C962.7 419.0 964.3 426.2 966.0 429.0 C967.7 431.8 968.7 432.5 971.0 432.5 C973.3 432.5 977.8 431.9 980.0 429.0 C982.2 426.1 982.5 419.0 984.0 415.0 C985.5 411.0 987.6 405.8 989.0 405.0 C990.4 404.2 991.1 406.2 992.5 410.0 C993.9 413.8 995.8 422.9 997.5 427.5 C999.2 432.1 1001.1 435.5 1002.5 437.5 C1003.9 439.5 1004.6 440.8 1006.0 439.5 C1007.4 438.2 1009.3 433.6 1011.0 430.0 C1012.7 426.4 1014.5 419.0 1016.0 418.0 C1017.5 417.0 1018.5 419.9 1020.0 424.0 C1021.5 428.1 1023.5 436.7 1025.0 442.5 C1026.5 448.3 1027.7 455.1 1029.0 459.0 C1030.3 462.9 1031.6 466.2 1033.0 466.0 C1034.4 465.8 1036.2 462.2 1037.5 457.5 C1038.8 452.8 1039.9 442.2 1041.0 437.5 C1042.1 432.8 1042.9 428.2 1044.0 429.0 C1045.1 429.8 1046.1 437.8 1047.5 442.5 C1048.9 447.2 1050.8 454.1 1052.5 457.5 C1054.2 460.9 1055.4 461.6 1057.5 463.0 C1059.6 464.4 1062.5 464.4 1065.0 466.0 C1067.5 467.6 1070.2 469.3 1072.5 472.5 C1074.8 475.7 1076.9 482.8 1079.0 485.0 C1081.1 487.2 1083.0 486.4 1085.0 486.0 C1087.0 485.6 1089.2 484.2 1091.0 482.5 C1092.8 480.8 1094.0 475.6 1095.5 476.0 C1097.0 476.4 1098.4 481.0 1100.0 485.0 C1101.6 489.0 1103.5 496.8 1105.0 500.0 C1106.5 503.2 1107.5 504.7 1109.0 504.0 C1110.5 503.3 1112.2 498.2 1114.0 496.0 C1115.8 493.8 1118.3 491.0 1120.0 491.0 C1121.7 491.0 1122.8 493.7 1124.0 496.0 C1125.2 498.3 1126.1 504.2 1127.5 505.0 C1128.9 505.8 1130.8 500.6 1132.5 501.0 C1134.2 501.4 1135.8 506.4 1137.5 507.5 C1139.2 508.6 1141.1 506.2 1142.5 507.5 C1143.9 508.8 1144.8 511.7 1146.0 515.0 C1147.2 518.3 1148.5 523.3 1150.0 527.5 C1151.5 531.7 1153.2 536.2 1155.0 540.0 C1156.8 543.8 1160.0 548.3 1161.0 550.0" fill="none" stroke="#9c3a96" stroke-width="1.6" stroke-linejoin="round"/><path d="M766 327 V835" stroke="#d8d8d8" stroke-width="1.600"/><rect x="150" y="326.500" width="1013" height="509.500" fill="none" stroke="#fff" stroke-width="4"/></svg>
<div class="abs" style="left:0;top:862.500px;width:1200px;height:2.500px;background:#dcecfc"></div>
<div class="abs" style="left:0;top:865px;width:1200px;height:35px;background:linear-gradient(#3a86f0 0,#2a6ee8 8%,#245ddc 20%,#2458d8 80%,#1c47b8 100%)"></div>
<div class="abs" style="left:0;top:865px;width:112px;height:35px;border-radius:0 12px 12px 0;background:linear-gradient(#5fb05a 0,#3f9a3c 15%,#3a8f38 60%,#2f7a2e 100%);box-shadow:2px 0 3px #1a3a9a"></div>
<svg class="abs" style="left:13px;top:870px" width="24" height="24" viewBox="0 0 24 24"><path d="M2 4 q4 -3 9 0 l-1 7 q-5 -3 -9 0z" fill="#e8602a"/><path d="M12.500 4 q4 3 9 0 l-1 7 q-5 3 -9 0z" fill="#7ac043"/><path d="M1 12.500 q4 -3 9 0 l-1 7 q-5 -3 -9 0z" fill="#3a8ae8"/><path d="M11.500 12.500 q4 3 9 0 l-1 7 q-5 3 -9 0z" fill="#f4c21a"/></svg>
<div class="abs" style="left:40px;top:871px;font-size:20px;font-weight:bold;font-style:italic;color:#fff;text-shadow:1px 1px 2px #1a4a1a">start</div>
<div class="abs" style="left:125px;top:868px;width:187px;height:29px;background:#1e52c6;border-radius:3px;box-shadow:inset 1px 1px 2px #143a98"></div>
<svg class="abs" style="left:136px;top:873px" width="20" height="20" viewBox="0 0 20 20"><g stroke="#e8e8e8" stroke-width="2" stroke-dasharray="2 2"><circle cx="10" cy="10" r="8" fill="none"/></g><circle cx="9" cy="9" r="5.500" fill="#f2e21a"/><path d="M9 14 L9 9 L14 9 L14 14Z" fill="#fff" stroke="#333" stroke-width="1"/></svg>
<div class="abs" style="left:159px;top:876px;font-size:12px;letter-spacing:.6px;color:#fff">DataLinkII</div>
<div class="abs" style="left:1008px;top:865px;width:192px;height:35px;background:linear-gradient(#3aa0f0 0,#1a8ae8 10%,#1580e0 80%,#1470c8 100%);border-left:1px solid #0e50a8"></div>
<div class="abs" style="left:997px;top:873px;width:18px;height:18px;border-radius:9px;background:radial-gradient(circle at 40% 40%,#8ac4ff,#2a78e0);border:1px solid #d0e4ff"></div>
<svg class="abs" style="left:1000px;top:876px" width="12" height="12" viewBox="0 0 12 12"><path d="M8 2 L4 6 L8 10" stroke="#fff" stroke-width="2.200" fill="none"/></svg>
<svg class="abs" style="left:1016px;top:870px" width="110" height="24" viewBox="0 0 110 24"><rect x="4" y="6" width="12" height="10" fill="#2a2e52"/><path d="M5 10 l8 8 M13 10 l-8 8" stroke="#e03030" stroke-width="2"/><path d="M17 5 v6 M20 4 v8" stroke="#e8e8e8" stroke-width="1.500"/><circle cx="37" cy="10" r="6" fill="#f0f4ff" stroke="#9ab"/><path d="M28 20 l5 -6" stroke="#dde" stroke-width="2"/><rect x="47" y="7" width="9" height="9" fill="#b02838"/><rect x="52" y="10" width="10" height="10" fill="#2a3a8a"/><circle cx="51" cy="7" r="3" fill="#e8e8f8"/><rect x="69" y="5" width="8" height="14" fill="#e8a838"/><rect x="76" y="9" width="7" height="10" fill="#5aa84a"/><rect x="80" y="13" width="4" height="7" fill="#c03030"/><rect x="90" y="5" width="16" height="12" fill="#8e8e92" stroke="#c8c8d0"/><rect x="93" y="18" width="10" height="2" fill="#555"/></svg>
<div class="abs" style="left:1135px;top:876px;font-size:11px;letter-spacing:.5px;color:#fff">1:43 PM</div>
</div></body></html>
